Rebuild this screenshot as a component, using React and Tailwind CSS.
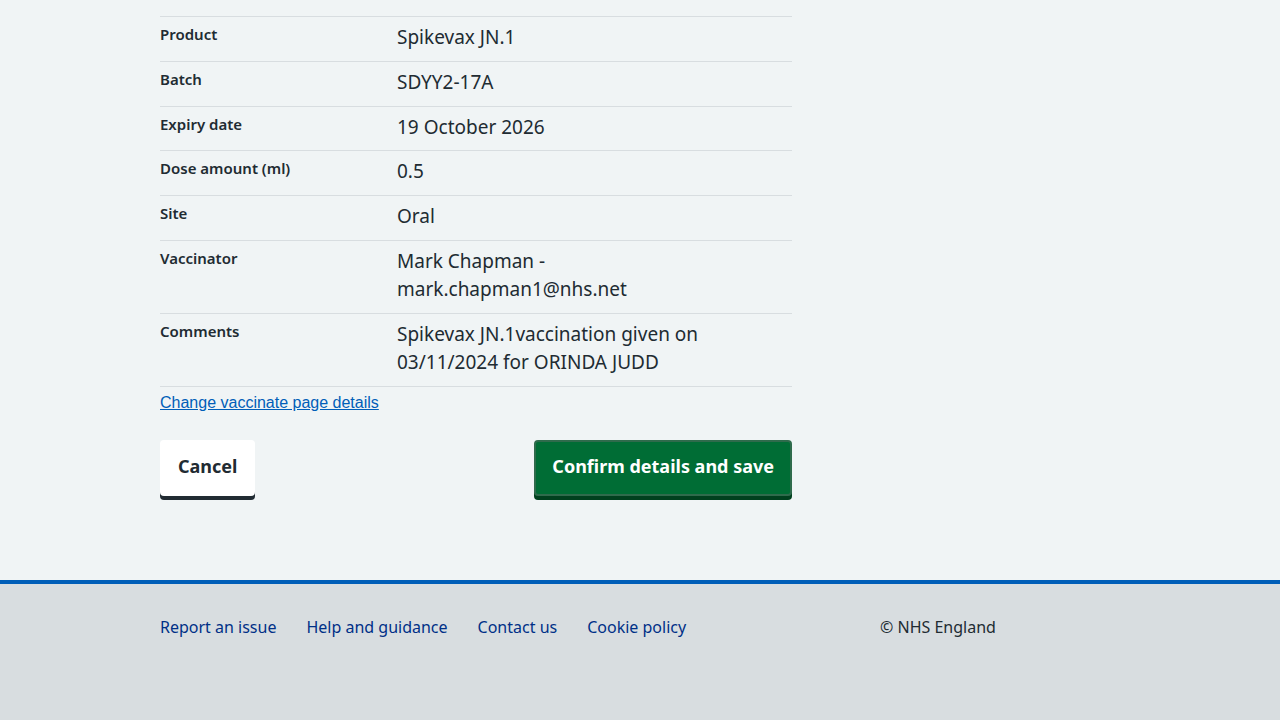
import React from 'react'

const rows = [
  { key: 'Product', value: ['Spikevax JN.1'] },
  { key: 'Batch', value: ['SDYY2-17A'] },
  { key: 'Expiry date', value: ['19 October 2026'] },
  { key: 'Dose amount (ml)', value: ['0.5'] },
  { key: 'Site', value: ['Oral'] },
  { key: 'Vaccinator', value: ['Mark Chapman -', 'mark.chapman1@nhs.net'] },
  { key: 'Comments', value: ['Spikevax JN.1vaccination given on', '03/11/2024 for ORINDA JUDD'] },
]

const font = { fontFamily: '"Noto Sans", "Open Sans", sans-serif' }

export default function App() {
  return (
    <div className="min-h-[720px] bg-[#f0f4f5] text-[#212b32] flex flex-col" style={font}>
      <main className="pl-[160px] pt-4 pb-[84px]">
        <div className="w-[632px]">
          {/* Summary list */}
          <dl className="border-t border-[#d8dde0]">
            {rows.map((row) => (
              <div key={row.key} className="flex border-b border-[#d8dde0] pt-[6px] pb-[9.8px]">
                <dt className="w-[237px] shrink-0 text-[15px] font-semibold leading-5 pt-[1px]">
                  {row.key}
                </dt>
                <dd className="text-[19px] leading-7">
                  {row.value.map((line) => (
                    <div key={line}>{line}</div>
                  ))}
                </dd>
              </div>
            ))}
          </dl>

          <a
            href="#"
            className="block mt-[6px] text-[16px] leading-5 text-[#005eb8] underline"
            style={{ fontFamily: '"Liberation Sans", Arial, sans-serif' }}
          >
            Change vaccinate page details
          </a>

          {/* Actions */}
          <div className="flex justify-between items-start mt-[27px]">
            <button className="h-[56px] px-[18px] pb-[3px] bg-white rounded-[4px] text-[18px] font-bold text-[#212b32] shadow-[0_4px_0_#212b32]">
              Cancel
            </button>
            <button className="h-[56px] px-[16px] pb-[3px] bg-[#006d35] border-2 border-[#2f6b4c] rounded-[4px] text-[18px] font-bold text-white shadow-[0_4px_0_#00401e]">
              Confirm details and save
            </button>
          </div>
        </div>
      </main>

      <footer className="flex-1 bg-[#d8dde0] border-t-4 border-[#005eb8] pl-[160px] pt-[31px] pb-[72px]">
        <div className="flex w-[960px]">
          <ul className="w-[720px] flex gap-[30px] text-[16px] leading-6 text-[#003087]">
            <li><a href="#">Report an issue</a></li>
            <li><a href="#">Help and guidance</a></li>
            <li><a href="#">Contact us</a></li>
            <li><a href="#">Cookie policy</a></li>
          </ul>
          <p className="text-[16px] leading-6 text-[#212b32]">© NHS England</p>
        </div>
      </footer>
    </div>
  )
}
